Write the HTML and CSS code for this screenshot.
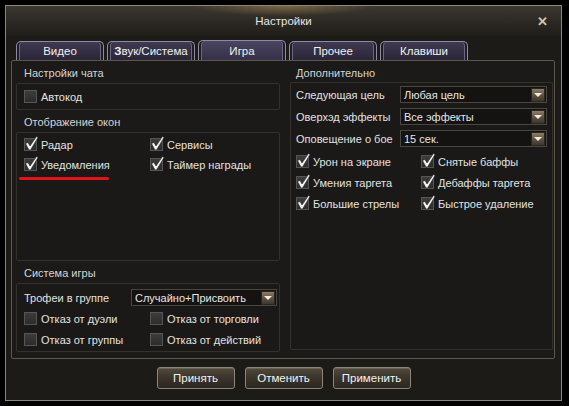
FILE: index.html
```html
<!DOCTYPE html>
<html>
    <head>
        <meta charset="utf-8">
        <title>Настройки</title>
        <link rel="stylesheet" href="styles.css">
    </head>
    <body>
        <div class="window">
            <header class="titlebar">
                <span class="title">Настройки</span>
                <span class="close">✕</span>
            </header>

            <nav class="tabs">
                <span class="tab">Видео</span>
                <span class="tab"><b>З</b>вук/Система</span>
                <span class="tab active">Игра</span>
                <span class="tab">Прочее</span>
                <span class="tab">Клавиши</span>
            </nav>

            <main class="frame">
                <section class="col">
                    <h2>Настройки чата</h2>
                    <div class="box box-chat">
                        <label class="check"><i class="cb"></i>Автокод</label>
                    </div>

                    <h2>Отображение окон</h2>
                    <div class="box box-windows">
                        <div class="grid">
                            <label class="check"><i class="cb on"></i>Радар</label>
                            <label class="check"><i class="cb on"></i>Сервисы</label>
                            <label class="check"><i class="cb on"></i>Уведомления</label>
                            <label class="check"><i class="cb on"></i>Таймер награды</label>
                        </div>
                        <span class="underline"></span>
                    </div>

                    <h2>Система игры</h2>
                    <div class="box box-system">
                        <div class="row">
                            <span class="label">Трофеи в группе</span>
                            <span class="select narrow">Случайно+Присвоить<i class="arrow"></i></span>
                        </div>
                        <div class="grid">
                            <label class="check"><i class="cb"></i>Отказ от дуэли</label>
                            <label class="check"><i class="cb"></i>Отказ от торговли</label>
                            <label class="check"><i class="cb"></i>Отказ от группы</label>
                            <label class="check"><i class="cb"></i>Отказ от действий</label>
                        </div>
                    </div>
                </section>

                <section class="col right">
                    <h2>Дополнительно</h2>
                    <div class="box box-extra">
                        <div class="row">
                            <span class="label">Следующая цель</span>
                            <span class="select">Любая цель<i class="arrow"></i></span>
                        </div>
                        <div class="row">
                            <span class="label">Оверхэд эффекты</span>
                            <span class="select">Все эффекты<i class="arrow"></i></span>
                        </div>
                        <div class="row">
                            <span class="label">Оповещение о бое</span>
                            <span class="select">15 сек.<i class="arrow"></i></span>
                        </div>
                        <div class="grid wide">
                            <label class="check"><i class="cb on"></i>Урон на экране</label>
                            <label class="check"><i class="cb on"></i>Снятые баффы</label>
                            <label class="check"><i class="cb on"></i>Умения таргета</label>
                            <label class="check"><i class="cb on"></i>Дебаффы таргета</label>
                            <label class="check"><i class="cb on"></i>Большие стрелы</label>
                            <label class="check"><i class="cb on"></i>Быстрое удаление</label>
                        </div>
                    </div>
                </section>
            </main>

            <footer class="buttons">
                <button>Принять</button>
                <button>Отменить</button>
                <button>Применить</button>
            </footer>
        </div>

        <script>
            // draw the tick into every checked box
            const tick = '<svg width="15" height="15" viewBox="0 0 15 15"><path d="M1.5 7.5 L4 6.5 L6 10 L12.5 0.5 L14 1.5 L6.5 14 L5 14 Z" fill="#f4f4f4" stroke="#222" stroke-width="0.6"/></svg>'
            document.querySelectorAll('.cb.on').forEach(el => el.innerHTML = tick)
        </script>
    </body>
</html>
```

FILE: styles.css
```css
body {
    margin: 0;
    padding: 5px 7px 5px 5px;
    background: #000;
    color: #dcdcdc;
    font-family: "Liberation Sans", Tahoma, Arial, sans-serif;
    font-size: 11px;
    white-space: nowrap;
}

.window {
    height: 396px;
    box-sizing: border-box;
    border: 1px solid #8c867c;
    background: #1d1b18;
    display: flex;
    flex-direction: column;
}

/* title */
.titlebar {
    height: 30px;
    position: relative;
    display: flex;
    align-items: center;
    justify-content: center;
    background:
        radial-gradient(ellipse 90px 10px at 50% 0, rgba(200, 160, 90, 0.45), transparent),
        linear-gradient(#3b3731, #2a2722 60%, #211e1a);
    color: #e6e6e6;
    font-size: 11.5px;
}
.close {
    position: absolute;
    right: 13px; top: 8px;
    color: #cfc6a8;
    font-weight: bold;
    font-size: 13px;
}

/* tabs */
.tabs {
    display: flex;
    gap: 3px;
    padding: 5px 0 0 10px;
    height: 19px;
}
.tab {
    width: 88px;
    box-sizing: border-box;
    height: 19px;
    display: flex;
    align-items: center;
    justify-content: center;
    border: 1px solid #8f8aa0;
    border-bottom: none;
    border-radius: 5px 5px 0 0;
    background: linear-gradient(#3f3951, #2a2637);
    box-shadow: inset 2px 0 0 #1f1c28, inset -2px 0 0 #1f1c28, inset 3px 0 0 #6c6680, inset -3px 0 0 #6c6680;
    color: #f0f0f0;
    font-size: 11.5px;
}
.tab.active {
    height: 20px;
    margin-top: -1px;
    background: linear-gradient(#4a4560, #353046);
}
.tab b { font-weight: bold; }

/* content frame */
.frame {
    margin: 0 6px 0 5px;
    height: 299px;
    box-sizing: border-box;
    border: 1px solid #5c564c;
    border-radius: 2px;
    background: #1b1a18;
    display: grid;
    grid-template-columns: 271px 1fr;
}
.col {
    display: flex;
    flex-direction: column;
    padding: 0 3px 0 4px;
}
.col.right { padding: 0 1px 0 7px; }

h2 {
    margin: 0;
    height: 22px;
    line-height: 24px;
    padding-left: 8px;
    font-weight: normal;
    font-size: 11px;
    color: #d4d4d4;
}
.col.right h2 { padding-left: 6px; height: 21px; }

.box {
    position: relative;
    box-sizing: border-box;
    border: 1px solid #34312c;
    border-radius: 2px;
    background: #1a1917;
    padding: 0 7px;
}
.box-chat { height: 27px; display: flex; align-items: center; }
.box-windows { height: 129px; padding-top: 4px; }
.box-system { height: 69px; padding-top: 5px; }
.box-extra { height: 268px; padding: 3px 5px 0 5px; }

.grid {
    display: grid;
    grid-template-columns: 126px 1fr;
    row-gap: 5px;
}
.grid.wide {
    grid-template-columns: 125px 1fr;
    row-gap: 6px;
    margin-top: 7px;
}
.box-system .grid { margin-top: 5px; row-gap: 6px; }

.check {
    display: flex;
    align-items: center;
    gap: 4px;
    height: 15px;
    color: #e2e2e2;
}
.cb {
    width: 11px;
    height: 11px;
    flex: none;
    border: 1px solid #555;
    background: linear-gradient(#3c3c3c, #2c2c2c);
    position: relative;
}
.cb svg {
    position: absolute;
    left: -1px; top: -3px;
}

.row {
    display: flex;
    align-items: center;
    height: 17px;
    margin-bottom: 5px;
}
.label { width: 104px; flex: none; color: #e2e2e2; }
.box-system .label { width: 107px; }

.select {
    flex: 1;
    height: 17px;
    box-sizing: border-box;
    border: 1px solid #4a4640;
    background: #141311;
    display: flex;
    align-items: center;
    justify-content: space-between;
    padding-left: 3px;
    color: #e6e6e6;
}
.select.narrow { flex: none; width: 146px; }
.arrow {
    width: 14px;
    height: 14px;
    margin-right: 1px;
    border: 1px solid #2a2520;
    box-sizing: border-box;
    background: linear-gradient(#8b7d65, #5c5140 55%, #3e362b);
    position: relative;
}
.arrow::after {
    content: "";
    position: absolute;
    left: 2px; top: 4px;
    border-left: 4px solid transparent;
    border-right: 4px solid transparent;
    border-top: 4px solid #f0ece0;
}

/* red annotation stroke */
.underline {
    position: absolute;
    left: 2px; top: 44px;
    width: 90px;
    height: 3px;
    border-radius: 2px;
    background: #e0151b;
}

/* bottom buttons */
.buttons {
    display: flex;
    justify-content: center;
    gap: 10px;
    padding-top: 8px;
}
.buttons button {
    width: 78px;
    height: 22px;
    border: 1px solid #8d8676;
    border-radius: 3px;
    background: linear-gradient(#51493c, #3a342b 50%, #2b2620);
    box-shadow: inset 0 1px 0 #6b6251;
    color: #f2f2f2;
    font-family: "Liberation Sans", Tahoma, Arial, sans-serif;
    font-size: 11.5px;
    padding: 0;
}
```
